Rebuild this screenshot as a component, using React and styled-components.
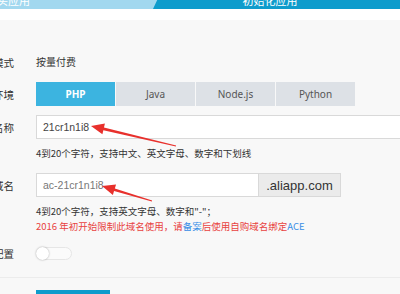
import React from 'react'
import styled, { createGlobalStyle } from 'styled-components'

const GlobalStyle = createGlobalStyle`
  html, body {
    margin: 0;
    padding: 0;
    background: #f8f8f8;
    overflow: hidden;
  }
  body {
    font-family: "Noto Sans CJK SC", "Noto Sans", sans-serif;
    color: #333;
  }
`

const Page = styled.div`
  width: 400px;
  height: 294px;
  position: relative;
  overflow: hidden;
  background: #f8f8f8;
`

const Steps = styled.div`
  display: flex;
  height: 9px;
  background: #0e9ccc;
  overflow: hidden;
`

const Step = styled.div`
  flex: ${(p) => (p.$first ? '0 0 160px' : '1')};
  background: ${(p) => (p.$first ? '#a2d8ef' : 'transparent')};
  clip-path: ${(p) => (p.$first ? 'polygon(0 0, 100% 0, 153px 100%, 0 100%)' : 'none')};
  color: #fff;
  font-size: 11px;
  line-height: 12px;
  margin-top: -6px;
  height: 15px;
  text-align: ${(p) => (p.$first ? 'left' : 'center')};
  text-indent: ${(p) => (p.$first ? '-14px' : '-20px')};
`

const WhiteBand = styled.div`
  height: 11px;
  background: #fff;
`

const Form = styled.div`
  display: flex;
  flex-direction: column;
  padding-top: 32px;
`

const Row = styled.div`
  display: flex;
  align-items: ${(p) => p.$align || 'center'};
  gap: 22px;
  margin-bottom: ${(p) => p.$mb || 0}px;
`

const Label = styled.div`
  width: 14px;
  flex: 0 0 14px;
  height: ${(p) => (p.$tall ? '24px' : 'auto')};
  display: flex;
  align-items: center;
  justify-content: flex-end;
  white-space: nowrap;
  font-size: 10.5px;
  color: #333;
`

const Field = styled.div`
  display: flex;
  flex-direction: column;
  flex: 1;
  min-width: 0;
`

const Plain = styled.div`
  font-size: 10px;
  line-height: 20px;
  color: #333;
`

const Tabs = styled.div`
  display: flex;
  gap: 1px;
`

const Tab = styled.div`
  width: 79px;
  height: 24px;
  display: flex;
  align-items: center;
  justify-content: center;
  font-size: 10px;
  font-weight: ${(p) => (p.$active ? 700 : 400)};
  background: ${(p) => (p.$active ? '#3cb4e0' : '#dde1e6')};
  color: ${(p) => (p.$active ? '#fff' : '#555')};
  font-family: "Noto Sans", "DejaVu Sans", sans-serif;
`

const InputBox = styled.div`
  box-sizing: border-box;
  height: 24px;
  width: ${(p) => p.$w || 'auto'};
  margin-right: ${(p) => (p.$w ? 0 : -20)}px;
  background: #fff;
  border: 1px solid #d9d9d9;
  display: flex;
  align-items: center;
  padding-left: 6px;
  font-size: 10.5px;
  color: ${(p) => p.$color || '#444'};
  font-family: "Liberation Sans", sans-serif;
`

const InputGroup = styled.div`
  display: flex;
`

const Addon = styled.div`
  box-sizing: border-box;
  height: 24px;
  width: 82px;
  background: #ebebeb;
  border: 1px solid #d9d9d9;
  border-left: none;
  display: flex;
  align-items: center;
  justify-content: center;
  font-size: 13px;
  color: #333;
  font-family: "Liberation Sans", sans-serif;
`

const Hint = styled.div`
  font-size: 9.5px;
  line-height: 15px;
  color: ${(p) => (p.$warn ? '#e8423f' : '#333')};
  white-space: nowrap;
  margin-top: ${(p) => p.$mt || 0}px;
`

const Link = styled.span`
  color: #3a8ee6;
`

const Toggle = styled.div`
  box-sizing: border-box;
  width: 36px;
  height: 13px;
  border-radius: 7px;
  background: #fbfbfb;
  border: 1px solid #e6e6e6;
  position: relative;
`

const Knob = styled.div`
  position: absolute;
  left: -1px;
  top: -1px;
  width: 13px;
  height: 13px;
  border-radius: 50%;
  background: #fff;
  box-shadow: 0 0 2px rgba(0, 0, 0, 0.35);
`

const Divider = styled.div`
  height: 1px;
  background: #ececec;
  margin-top: 16px;
`

const Footer = styled.div`
  padding: 12px 0 0 36px;
`

const Button = styled.div`
  width: 74px;
  height: 20px;
  background: #0e9ccc;
`

const Arrows = styled.svg`
  position: absolute;
  left: 0;
  top: 0;
  pointer-events: none;
`

const Arrow = ({ x1, y1, x2, y2 }) => {
  const dx = x2 - x1
  const dy = y2 - y1
  const len = Math.sqrt(dx * dx + dy * dy)
  const ux = dx / len
  const uy = dy / len
  const px = -uy
  const py = ux
  const hl = 13
  const hw = 5.5
  const bx = x2 - ux * hl
  const by = y2 - uy * hl
  const pts = `${x1 + px * 0.5},${y1 + py * 0.5} ${bx + px * 1.4},${by + py * 1.4} ${bx + px * hw},${by + py * hw} ${x2},${y2} ${bx - px * hw},${by - py * hw} ${bx - px * 1.4},${by - py * 1.4} ${x1 - px * 0.5},${y1 - py * 0.5}`
  return <polygon points={pts} fill="#e8302c" />
}

const App = () => {
  return (
    <Page>
      <GlobalStyle />
      <Steps>
        <Step $first>购买应用</Step>
        <Step>初始化应用</Step>
      </Steps>
      <WhiteBand />
      <Form>
        <Row $mb={10}>
          <Label>付费模式</Label>
          <Plain>按量付费</Plain>
        </Row>
        <Row $mb={9}>
          <Label>运行环境</Label>
          <Tabs>
            <Tab $active>PHP</Tab>
            <Tab>Java</Tab>
            <Tab>Node.js</Tab>
            <Tab>Python</Tab>
          </Tabs>
        </Row>
        <Row $align="flex-start" $mb={12}>
          <Label $tall>应用名称</Label>
          <Field>
            <InputBox>21cr1n1i8</InputBox>
            <Hint $mt={7}>4到20个字符，支持中文、英文字母、数字和下划线</Hint>
          </Field>
        </Row>
        <Row $align="flex-start" $mb={12}>
          <Label $tall>二级域名</Label>
          <Field>
            <InputGroup>
              <InputBox $w="223px" $color="#777">ac-21cr1n1i8</InputBox>
              <Addon>.aliapp.com</Addon>
            </InputGroup>
            <Hint $mt={7}>4到20个字符，支持英文字母、数字和"-"；</Hint>
            <Hint $warn>
              2016 年初开始限制此域名使用，请<Link>备案</Link>后使用自购域名绑定<Link>ACE</Link>
            </Hint>
          </Field>
        </Row>
        <Row>
          <Label>高级配置</Label>
          <Toggle>
            <Knob />
          </Toggle>
        </Row>
        <Divider />
        <Footer>
          <Button />
        </Footer>
      </Form>
      <Arrows width="400" height="294">
        <Arrow x1={176} y1={146} x2={91} y2={126} />
        <Arrow x1={152} y1={201} x2={102} y2={186} />
      </Arrows>
    </Page>
  )
}

export default App
